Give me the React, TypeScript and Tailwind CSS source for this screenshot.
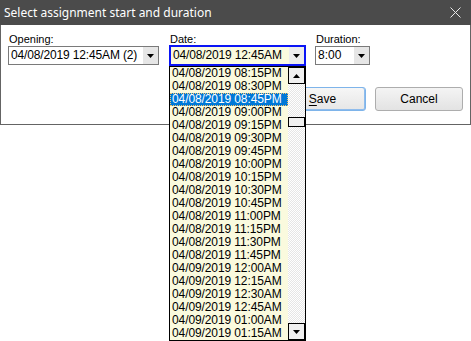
import React from "react";

const TIMES = [
  "04/08/2019 08:15PM",
  "04/08/2019 08:30PM",
  "04/08/2019 08:45PM",
  "04/08/2019 09:00PM",
  "04/08/2019 09:15PM",
  "04/08/2019 09:30PM",
  "04/08/2019 09:45PM",
  "04/08/2019 10:00PM",
  "04/08/2019 10:15PM",
  "04/08/2019 10:30PM",
  "04/08/2019 10:45PM",
  "04/08/2019 11:00PM",
  "04/08/2019 11:15PM",
  "04/08/2019 11:30PM",
  "04/08/2019 11:45PM",
  "04/09/2019 12:00AM",
  "04/09/2019 12:15AM",
  "04/09/2019 12:30AM",
  "04/09/2019 12:45AM",
  "04/09/2019 01:00AM",
  "04/09/2019 01:15AM",
];

const SELECTED = 2;

function Arrow({ up = false }: { up?: boolean }) {
  return (
    <svg width="7" height="4" viewBox="0 0 7 4" className="block">
      <path d={up ? "M0 4 L3.5 0 L7 4 Z" : "M0 0 L7 0 L3.5 4 Z"} fill="#000" />
    </svg>
  );
}

function ComboButton({ bg }: { bg: string }) {
  return (
    <div className={`flex w-[15px] shrink-0 items-center justify-center ${bg}`}>
      <Arrow />
    </div>
  );
}

function Label({ text }: { text: string }) {
  return (
    <div className="h-[13px] pl-px text-[11px] leading-[13px] text-black">{text}</div>
  );
}

function ScrollButton({ up }: { up?: boolean }) {
  return (
    <div className="flex h-[17px] w-full shrink-0 items-center justify-center border border-black bg-[#f0f0f0]">
      <Arrow up={up} />
    </div>
  );
}

export default function App() {
  return (
    <div className="relative h-[341px] w-[471px] overflow-hidden bg-white font-['Liberation_Sans',Arial,sans-serif]">
      {/* Dialog */}
      <div className="flex h-[125px] w-[471px] flex-col border-x border-b border-[#646464]">
        <div className="-mx-px flex h-[25px] shrink-0 items-center justify-between bg-[#4b4b4b] pl-[4px] pr-[10px]">
          <span className="font-['Noto_Sans',sans-serif] text-[12px] leading-none text-white">
            Select assignment start and duration
          </span>
          <svg width="11" height="11" viewBox="0 0 11 11">
            <path d="M0.5 0.5 L10.5 10.5 M10.5 0.5 L0.5 10.5" stroke="#e8e8e8" strokeWidth="1" />
          </svg>
        </div>

        <div className="flex-1 pl-[7px] pt-[8px]">
          <div className="flex items-start">
            {/* Opening */}
            <div className="w-[151px]">
              <Label text="Opening:" />
              <div className="flex h-[19px] border border-[#7a7a7a] bg-white">
                <div className="flex-1 pl-[2px] text-[12px] leading-[17px] tracking-[-0.15px] text-black">
                  04/08/2019 12:45AM (2)
                </div>
                <ComboButton bg="bg-[#e6e6e6]" />
              </div>
            </div>

            {/* Date with open list */}
            <div className="ml-[10px] w-[137px]">
              <Label text="Date:" />
              <div className="relative -mt-px">
                <div className="flex h-[21px] border-2 border-[#0a14f5] bg-[#fafade]">
                  <div className="flex-1 pl-[2px] text-[12px] leading-[17px] tracking-[-0.15px] text-black">
                    04/08/2019 12:45AM
                  </div>
                  <ComboButton bg="bg-[#ececec]" />
                </div>
                <div className="absolute left-0 top-full z-10 flex h-[275px] w-[137px] border border-black bg-[#fafade]">
                  <ul className="flex-1">
                    {TIMES.map((t, i) => (
                      <li
                        key={t}
                        className={`h-[13px] pl-[2px] text-[12px] leading-[13px] tracking-[-0.1px] ${
                          i === SELECTED
                            ? "bg-[#0078d7] text-white outline-1 -outline-offset-1 outline-dotted outline-[#f5c36b]"
                            : "text-black"
                        }`}
                      >
                        {t}
                      </li>
                    ))}
                  </ul>
                  <div className="flex w-[17px] flex-col bg-[repeating-conic-gradient(#ffffff_0_25%,#e6e6e6_0_50%)] bg-[length:2px_2px]">
                    <ScrollButton up />
                    <div className="mt-[33px] h-[10px] border border-black bg-[#f0f0f0]" />
                    <div className="flex-1" />
                    <ScrollButton />
                  </div>
                </div>
              </div>
            </div>

            {/* Duration */}
            <div className="ml-[9px] w-[55px]">
              <Label text="Duration:" />
              <div className="flex h-[19px] border border-[#7a7a7a] bg-white">
                <div className="flex-1 pl-[2px] text-[12px] leading-[17px] text-black">8:00</div>
                <ComboButton bg="bg-[#e6e6e6]" />
              </div>
            </div>
          </div>

          <div className="mt-[21px] flex justify-end gap-[9px] pr-[7px]">
            <button
              type="button"
              className="h-[24px] w-[87px] rounded-[3px] border border-[#7eb4ea] bg-gradient-to-b from-[#f6f6f6] to-[#e6e6e6] text-[12px] text-black shadow-[inset_0_-1px_0_#8fbcec,inset_-1px_0_0_#8fbcec]"
            >
              <span className="underline underline-offset-2">S</span>ave
            </button>
            <button
              type="button"
              className="h-[24px] w-[88px] rounded-[3px] border border-[#adadad] bg-gradient-to-b from-[#f4f4f4] to-[#e3e3e3] text-[12px] text-black"
            >
              Cancel
            </button>
          </div>
        </div>
      </div>
    </div>
  );
}
